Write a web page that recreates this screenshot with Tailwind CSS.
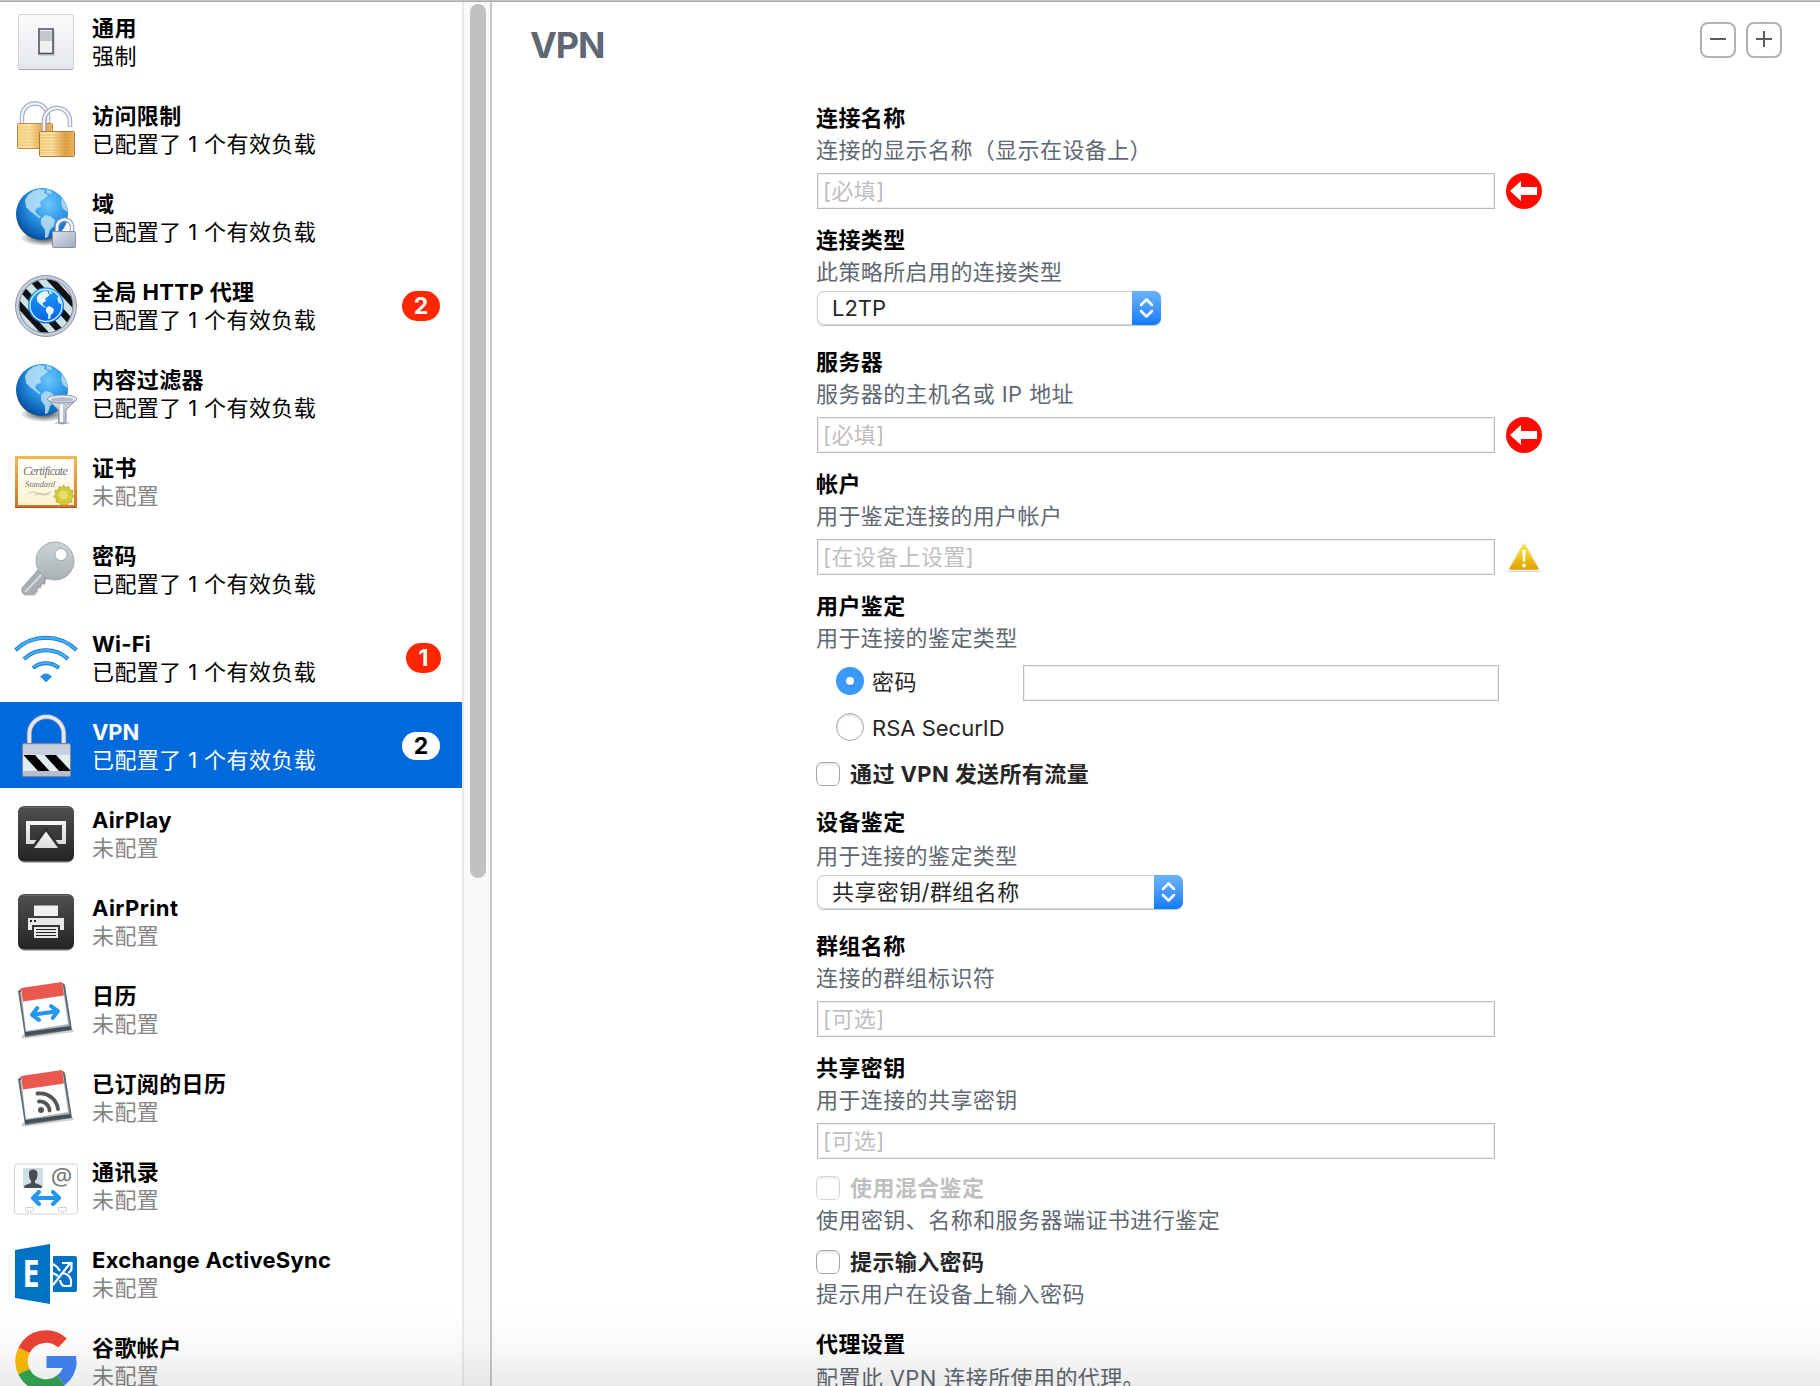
<!DOCTYPE html>
<html lang="zh-CN">
<head>
<meta charset="utf-8">
<title>VPN</title>
<script src="https://cdn.jsdelivr.net/npm/@tailwindcss/browser@4"></script>
</head>
<body class="relative h-[1386px] w-[1820px] overflow-hidden bg-white font-['Inter','Noto_Sans_CJK_SC',sans-serif] text-[22px] leading-[28px] tracking-[0.4px] text-black">

<!-- Shared gradients and symbols -->
<svg class="absolute size-0" aria-hidden="true">
  <defs>
    <radialGradient id="ocean" cx="0.62" cy="0.3" r="0.75"><stop offset="0" stop-color="#6cc8fb"/><stop offset="0.45" stop-color="#2f9bea"/><stop offset="0.8" stop-color="#1268bd"/><stop offset="1" stop-color="#07498f"/></radialGradient>
    <radialGradient id="shade"><stop offset="0.3" stop-color="#000" stop-opacity="0.55"/><stop offset="1" stop-color="#000" stop-opacity="0"/></radialGradient>
    <linearGradient id="gold"><stop offset="0" stop-color="#fbd88a"/><stop offset="0.35" stop-color="#fce3a2"/><stop offset="0.75" stop-color="#e2a045"/><stop offset="1" stop-color="#efb869"/></linearGradient>
    <linearGradient id="steel" x1="0" y1="0" x2="1" y2="1"><stop offset="0" stop-color="#dfe4ed"/><stop offset="1" stop-color="#9fabbf"/></linearGradient>
    <linearGradient id="plate" x1="0" y1="0" x2="0" y2="1"><stop offset="0" stop-color="#fbfbfc"/><stop offset="1" stop-color="#e4e7ec"/></linearGradient>
    <linearGradient id="dark" x1="0" y1="0" x2="0" y2="1"><stop offset="0" stop-color="#505050"/><stop offset="1" stop-color="#242424"/></linearGradient>
    <linearGradient id="pale" x1="0" y1="0" x2="0" y2="1"><stop offset="0" stop-color="#f6f6f6"/><stop offset="1" stop-color="#dcdcdc"/></linearGradient>
    <linearGradient id="frame" x1="0" y1="0" x2="0" y2="1"><stop offset="0" stop-color="#f3b950"/><stop offset="1" stop-color="#cf722a"/></linearGradient>
    <linearGradient id="paper" x1="0" y1="0" x2="0" y2="1"><stop offset="0" stop-color="#ffffff"/><stop offset="1" stop-color="#fdf3cf"/></linearGradient>
    <linearGradient id="keymetal" x1="0" y1="0" x2="0" y2="1"><stop offset="0" stop-color="#cdd4d6"/><stop offset="1" stop-color="#a9b1b4"/></linearGradient>
    <linearGradient id="warn" x1="0" y1="0" x2="0" y2="1"><stop offset="0" stop-color="#fde53a"/><stop offset="1" stop-color="#dfa400"/></linearGradient>
    <linearGradient id="bluering" x1="0" y1="0" x2="0" y2="1"><stop offset="0" stop-color="#1ba0ff"/><stop offset="1" stop-color="#0560e0"/></linearGradient>
    <symbol id="land" viewBox="0 0 52 52">
      <path d="M12 7 17 3 23 1 29 2 28 5 32 7 29 10 24 14 25 19 21 20 19 23 21 26 25 29 23 30 18 26 14 23 10 19 9 12ZM30 1 35 3 36 6 31 5ZM46 10 50 17 51.500 24 47 21 45 15ZM25 31 29 27 34 28 39 32 38 38 34 42 32 49 29 50 29 42 25 36Z"/>
    </symbol>
    <symbol id="globe" viewBox="0 0 64 64">
      <ellipse cx="30" cy="52" rx="24" ry="8" fill="url(#shade)"/>
      <circle cx="28" cy="28" r="26" fill="url(#ocean)"/>
      <use href="#land" x="2" y="2" width="52" height="52" fill="#b9e0f5" fill-opacity="0.85"/>
    </symbol>
    <symbol id="arrows" viewBox="0 0 32 16">
      <path d="M3 8H29M9 2 3 8 9 14M23 2 29 8 23 14" fill="none" stroke="#2497ec" stroke-width="4" stroke-linecap="round" stroke-linejoin="round"/>
    </symbol>
    <symbol id="calendar" viewBox="0 0 64 64">
      <path d="M8 61 60 54 58 50 8 57Z" fill="#000" fill-opacity="0.18"/>
      <path d="M4 13 7 11 49 5 51 7 58 52 11 59Z" fill="#5d6a72"/>
      <path d="M6 14 49 7 56 50 12 56Z" fill="#aeb8bc"/>
      <path d="M11 57.500 57 51.500 56 48 11 54Z" fill="#454f55"/>
      <path d="M7 11 48 4 54 46 12 53Z" fill="#fdfdfd"/>
      <path d="M7 10 48 4 50 17.500 9 23.500Z" fill="#e9574f"/>
    </symbol>
    <symbol id="chev" viewBox="0 0 29 34">
      <path d="M9 14 14.500 8.500 20 14M9 20 14.500 25.500 20 20" fill="none" stroke="#fff" stroke-width="2.500" stroke-linecap="round" stroke-linejoin="round"/>
    </symbol>
    <symbol id="required" viewBox="0 0 36 36">
      <circle cx="18" cy="18" r="18" fill="#ff0a00"/>
      <path d="M4 18 15 8V14H31V22H15V28Z" fill="#fff"/>
    </symbol>
  </defs>
</svg>

<div class="flex h-full w-full">
  <!-- Payload list -->
  <nav class="flex h-full w-[464px] shrink-0 flex-col gap-[2px] overflow-hidden border-r-2 border-[#e8e8e8]">
    <div class="-mt-[2px] flex h-[86px] shrink-0 items-center gap-[14px] pt-[2px] pl-[14px]">
      <svg class="size-16 shrink-0" viewBox="0 0 64 64">
        <rect x="4.500" y="4.500" width="55" height="55" rx="1.500" fill="url(#plate)" stroke="#cfd1d4"/><path d="M5 59.500H59" stroke="#a9abad"/>
        <rect x="24" y="20" width="17" height="26" fill="#000" fill-opacity="0.12"/>
        <rect x="25" y="19" width="14" height="24.500" fill="#eef0f2" stroke="#4a4e50" stroke-width="1.500"/><rect x="26" y="21" width="12" height="10" fill="#c6c8cb"/>
      </svg>
      <div class="-mt-px"><div class="font-bold">通用</div><div>强制</div></div>
    </div>
    <div class="flex h-[86px] shrink-0 items-center gap-[14px] pt-[2px] pl-[14px]">
      <svg class="size-16 shrink-0" viewBox="0 0 64 64" fill="none">
        <path d="M8 26V18.500a13 13 0 0 1 26 0V26" stroke="#98a3bd" stroke-width="4.500"/><path d="M8 26V18.500a13 13 0 0 1 26 0V26" stroke="#eef1f7" stroke-width="2.500"/>
        <rect x="3.500" y="25.500" width="35" height="25" rx="1" fill="url(#gold)" stroke="#b98a4a"/>
        <path d="M4 29H38M4 32H38M4 35H38M4 38H38M4 41H38M4 44H38M4 47H38" stroke="#c98a30" stroke-opacity="0.3"/>
        <path d="M30 34V23a13 13 0 0 1 26 0V29" stroke="#98a3bd" stroke-width="4.500"/><path d="M30 34V23a13 13 0 0 1 26 0V28.500" stroke="#eef1f7" stroke-width="2.500"/>
        <rect x="25.500" y="33.500" width="35" height="25" rx="1" fill="url(#gold)" stroke="#a97d45"/>
        <path d="M26 37H60M26 40H60M26 43H60M26 46H60M26 49H60M26 52H60M26 55H60" stroke="#c98a30" stroke-opacity="0.35"/>
      </svg>
      <div><div class="font-bold">访问限制</div><div>已配置了 1 个有效负载</div></div>
    </div>
    <div class="flex h-[86px] shrink-0 items-center gap-[14px] pt-[2px] pl-[14px]">
      <svg class="size-16 shrink-0" viewBox="0 0 64 64">
        <use href="#globe" width="64" height="64"/>
        <path d="M43 46V41a7.500 7.500 0 0 1 15 0V46" fill="none" stroke="#8c98ae" stroke-width="4.500"/><path d="M43 46V41a7.500 7.500 0 0 1 15 0V46" fill="none" stroke="#f0f3f8" stroke-width="2.500"/>
        <rect x="38.500" y="45.500" width="23" height="16" rx="1" fill="url(#steel)" stroke="#8791a5"/>
      </svg>
      <div><div class="font-bold">域</div><div>已配置了 1 个有效负载</div></div>
    </div>
    <div class="flex h-[86px] shrink-0 items-center gap-[14px] pt-[2px] pl-[14px]">
      <svg class="size-16 shrink-0" viewBox="0 0 64 64">
        <clipPath id="disc"><circle cx="32" cy="32" r="26.500"/></clipPath>
        <circle cx="32" cy="32" r="30.500" fill="#c6cddc" stroke="#8d96aa"/>
        <circle cx="32" cy="32" r="27" fill="#cfe0e6" stroke="#7f899c"/>
        <g clip-path="url(#disc)" stroke="#0c1214" stroke-width="6.500"><path d="M-4 21 42 71M-2 4 58 70M8 -6 68 60M26 -6 78 50"/></g>
        <circle cx="32" cy="31.500" r="18" fill="url(#bluering)"/><circle cx="32" cy="31.500" r="16" fill="none" stroke="#d8edff" stroke-width="1.300"/>
        <use href="#land" x="17.500" y="16.500" width="30" height="30" fill="#e8f5ff"/>
      </svg>
      <div class="grow"><div class="font-bold tracking-[0.4px]">全局 HTTP 代理</div><div>已配置了 1 个有效负载</div></div>
      <span class="mr-[22px] mb-px flex h-[30px] w-[38px] items-center justify-center rounded-full bg-[#ff2600] text-[23px] font-bold tracking-normal text-white">2</span>
    </div>
    <div class="flex h-[86px] shrink-0 items-center gap-[14px] pt-[2px] pl-[14px]">
      <svg class="size-16 shrink-0" viewBox="0 0 64 64">
        <use href="#globe" width="64" height="64"/>
        <ellipse cx="48" cy="61" rx="8" ry="1.500" fill="#000" fill-opacity="0.2"/>
        <path d="M33.500 37 44.500 48V60.500C46 62 51 62 52 60.500V48L63 37Z" fill="url(#steel)" stroke="#8791a5"/>
        <ellipse cx="48.200" cy="37" rx="14.700" ry="4" fill="#eef1f6" stroke="#8791a5"/><ellipse cx="48.200" cy="37.500" rx="11.500" ry="2.300" fill="#b4bccb"/>
        <path d="M47.500 42V60" stroke="#f5f7fa" stroke-width="3"/>
      </svg>
      <div><div class="font-bold">内容过滤器</div><div>已配置了 1 个有效负载</div></div>
    </div>
    <div class="flex h-[86px] shrink-0 items-center gap-[14px] pt-[2px] pl-[14px]">
      <svg class="size-16 shrink-0" viewBox="0 0 64 64">
        <rect x="1" y="6" width="62" height="52" fill="url(#frame)"/><path d="M1 57.500H63" stroke="#a8581c"/><rect x="4" y="9" width="56" height="46" fill="url(#paper)"/>
        <text x="9" y="25" font-family="Liberation Serif" font-style="italic" font-size="12.500" fill="#777" textLength="45" letter-spacing="0">Certificate</text>
        <text x="11" y="36.500" font-family="Liberation Serif" font-style="italic" font-size="8.500" fill="#777" textLength="30" letter-spacing="0">Standard</text>
        <path d="M14 44C20 38 26 48 37 42M20 45C26 42 30 47 35 44" fill="none" stroke="#c9c2a8"/>
        <path d="m49.500 35 2 3 3.500-1.500.5 3.500 3.500.5-1 3.500 2.500 2.500-3 2 .5 3.500-3.500.5-1.500 3-3-1.500-3 1.500-1.500-3-3.500-.5.5-3.500-3-2 2.500-2.500-1-3.500 3.500-.5.500-3.500 3.500 1.500Z" fill="#d6cb3c" stroke="#a89c22" stroke-width="0.700"/><circle cx="49.500" cy="45" r="4.500" fill="#e6de6a"/>
      </svg>
      <div><div class="font-bold">证书</div><div class="text-[#868686]">未配置</div></div>
    </div>
    <div class="flex h-[86px] shrink-0 items-center gap-[14px] pt-[2px] pl-[14px]">
      <svg class="size-16 shrink-0" viewBox="0 0 64 64">
        <path d="M25 32 8 50V54L10 56.500H21L24 53V49.500H27L28 46 31 45V40.500L36 40Z" fill="#000" fill-opacity="0.15" transform="translate(0.500 1.500)"/>
        <path d="M24 32 8 50V54L10 56H20L23 52V49H26L27 46 31 45V40.500L36 40Z" fill="#a9b0b4" stroke="#868e92" stroke-width="0.800"/>
        <path d="M28 36 11 54" stroke="#d5dadc" stroke-width="2"/>
        <path fill-rule="evenodd" d="M22 23A19 19 0 1 1 60 23A19 19 0 1 1 22 23ZM41 16.500A6 6 0 1 0 53 16.500A6 6 0 1 0 41 16.500Z" fill="url(#keymetal)" stroke="#929b9f" stroke-width="0.800"/>
      </svg>
      <div><div class="font-bold">密码</div><div>已配置了 1 个有效负载</div></div>
    </div>
    <div class="flex h-[86px] shrink-0 items-center gap-[14px] pt-[2px] pl-[14px]">
      <svg class="size-16 shrink-0" viewBox="0 0 64 64" fill="none">
        <g stroke="#1b6fb8" stroke-width="4"><path d="M1.500 24A44 44 0 0 1 62.500 24M10 33A32 32 0 0 1 54 33M19 42A20 20 0 0 1 45 42"/></g>
        <g stroke="#3fb0fb" stroke-width="2.400"><path d="M2 23.500A44 44 0 0 1 62 23.500M10.500 32.500A32 32 0 0 1 53.500 32.500M19.500 41.500A20 20 0 0 1 44.500 41.500"/></g>
        <path d="M26.500 50.500Q32 45 37.500 50.500L32 56Z" fill="#1f8ff2" stroke="#1b6fb8" stroke-width="0.500"/>
      </svg>
      <div class="grow"><div class="font-bold tracking-[0.2px]">Wi-Fi</div><div>已配置了 1 个有效负载</div></div>
      <span class="mr-[21px] mb-px flex h-[30px] w-[35px] items-center justify-center rounded-full bg-[#ff2600] text-[23px] font-bold tracking-normal text-white">1</span>
    </div>
    <div class="flex h-[86px] shrink-0 items-center gap-[14px] bg-[#0069dc] pt-[2px] pl-[14px] text-white">
      <svg class="size-16 shrink-0" viewBox="0 0 64 64">
        <path d="M15.300 32V20a17.200 17.200 0 0 1 34.400 0V32" fill="none" stroke="#8c97a8" stroke-width="5"/><path d="M15.300 32V20a17.200 17.200 0 0 1 34.400 0V32" fill="none" stroke="#e4e7ee" stroke-width="3.600"/>
        <rect x="8.500" y="29.500" width="48" height="33" rx="1.500" fill="#b5bccd" stroke="#7c8799"/>
        <rect x="9" y="31" width="47" height="9" fill="#c9cedc"/>
        <rect x="9" y="40.500" width="47" height="16.500" fill="#e2edf0"/>
        <path d="M9.500 41H21L35.500 57H24ZM30.500 41H42L56 56V57H45Z" fill="#000"/>
      </svg>
      <div class="grow"><div class="font-bold tracking-[-0.1px]">VPN</div><div>已配置了 1 个有效负载</div></div>
      <span class="mr-[22px] flex h-[28px] w-[38px] items-center justify-center rounded-full bg-white text-[23px] font-bold tracking-normal text-black">2</span>
    </div>
    <div class="flex h-[86px] shrink-0 items-center gap-[14px] pt-[2px] pl-[14px]">
      <svg class="size-16 shrink-0" viewBox="0 0 64 64">
        <rect x="5" y="6" width="54" height="55" rx="6" fill="#000" fill-opacity="0.3"/><rect x="4" y="4" width="56" height="55.500" rx="6" fill="url(#dark)"/><path d="M8 5.500H56" stroke="#6a6a6a"/>
        <path d="M14 40V21H50V40H14Z" fill="none" stroke="url(#pale)" stroke-width="4"/>
        <path d="M32 24.500 15.500 48H48.500Z" fill="#303030"/><path d="M32 29.500 20 46H44Z" fill="url(#pale)"/>
      </svg>
      <div><div class="font-bold tracking-[0.3px]">AirPlay</div><div class="text-[#868686]">未配置</div></div>
    </div>
    <div class="flex h-[86px] shrink-0 items-center gap-[14px] pt-[2px] pl-[14px]">
      <svg class="size-16 shrink-0" viewBox="0 0 64 64">
        <rect x="5" y="6" width="54" height="55" rx="6" fill="#000" fill-opacity="0.3"/><rect x="4" y="4" width="56" height="55.500" rx="6" fill="url(#dark)"/><path d="M8 5.500H56" stroke="#6a6a6a"/>
        <rect x="20" y="15.500" width="24" height="10.500" fill="#f0f0f0"/><path d="M14 28H50V40H46V35H18V40H14Z" fill="#e8e8e8"/>
        <path d="M16 30h2v2h-2zM20 30h2v2h-2z" fill="#222"/>
        <rect x="20" y="37" width="24" height="11" fill="#e6e6e6"/><path d="M22 39.500H42M22 42.500H42M22 45.500H42" stroke="#222"/>
      </svg>
      <div><div class="font-bold tracking-[0.45px]">AirPrint</div><div class="text-[#868686]">未配置</div></div>
    </div>
    <div class="flex h-[86px] shrink-0 items-center gap-[14px] pt-[2px] pl-[14px]">
      <svg class="size-16 shrink-0" viewBox="0 0 64 64">
        <use href="#calendar" width="64" height="64"/>
        <g transform="rotate(-8 31 35)"><use href="#arrows" x="14.500" y="27" width="33" height="16"/></g>
      </svg>
      <div><div class="font-bold">日历</div><div class="text-[#868686]">未配置</div></div>
    </div>
    <div class="flex h-[86px] shrink-0 items-center gap-[14px] pt-[2px] pl-[14px]">
      <svg class="size-16 shrink-0" viewBox="0 0 64 64">
        <use href="#calendar" width="64" height="64"/>
        <circle cx="27" cy="44" r="3" fill="#555"/><path d="M25 35.500A9.500 9.500 0 0 1 35.500 44.500M23.500 27.500A18 18 0 0 1 44 43" fill="none" stroke="#555" stroke-width="3.800" stroke-linecap="round"/>
      </svg>
      <div><div class="font-bold">已订阅的日历</div><div class="text-[#868686]">未配置</div></div>
    </div>
    <div class="flex h-[86px] shrink-0 items-center gap-[14px] pt-[2px] pl-[14px]">
      <svg class="size-16 shrink-0" viewBox="0 0 64 64">
        <path d="M15 60H3Q0.500 60 0.500 57V13Q0.500 10 3 10H61Q63.500 10 63.500 13V57Q63.500 60 61 60H49.500V57H52.500V53.500H44.500V57H47.500V60H16.500V57H19.500V53.500H11.500V57H14.500V60" fill="#fff" stroke="#d3d3d3"/>
        <rect x="9" y="14" width="20" height="20" fill="#cfdde4"/>
        <path d="M15 20Q14.500 15.500 19 15.500T23.500 20Q23.500 25 21 27V29L27.500 31.500 28 34H10L10.500 31.500 17 29V27Q15 25 15 20Z" fill="#4a4e50"/>
        <text x="47.500" y="31" text-anchor="middle" font-family="Noto Sans" font-size="24" letter-spacing="0" fill="#777">@</text>
        <use href="#arrows" x="15.500" y="36" width="33" height="16"/>
      </svg>
      <div><div class="font-bold">通讯录</div><div class="text-[#868686]">未配置</div></div>
    </div>
    <div class="flex h-[86px] shrink-0 items-center gap-[14px] pt-[2px] pl-[14px]">
      <svg class="size-16 shrink-0" viewBox="0 0 64 64">
        <path d="M1 8 36 2V62L1 56Z" fill="#0072c6"/>
        <text x="8.500" y="44.500" font-family="Open Sans" font-weight="700" font-size="37" letter-spacing="0" textLength="17" lengthAdjust="spacingAndGlyphs" fill="#fff">E</text>
        <path d="M39 14H61Q63 14 63 16V48Q63 50 61 50H39Z" fill="#0072c6"/>
        <g fill="none" stroke="#fff" stroke-width="2.200"><path d="M39 43 57 20M48 21H57.500V27Q57 30 54 31M57 43.500V38Q56 33 49 31M57.500 44H50Q47 43 46 38M39 22Q43 24 46 29M39 31 44 34"/></g>
      </svg>
      <div><div class="font-bold tracking-[0.27px]">Exchange ActiveSync</div><div class="text-[#868686]">未配置</div></div>
    </div>
    <div class="flex h-[86px] shrink-0 items-center gap-[14px] pt-[2px] pl-[14px]">
      <svg class="size-16 shrink-0" viewBox="0 0 64 64" fill="none" stroke-width="12.500">
        <path d="M10 20.400A24.400 24.400 0 0 1 48.500 13" stroke="#e94335"/>
        <path d="M10 41.600A24.400 24.400 0 0 1 10 20.400" stroke="#fbbc05"/>
        <path d="M47 50.200A24.400 24.400 0 0 1 10 41.600" stroke="#34a853"/>
        <path d="M56.400 32A24.400 24.400 0 0 1 47 50.200" stroke="#4285f4"/>
        <path d="M32.500 26H62Q63 32 62 38H32.500Z" fill="#4285f4"/>
      </svg>
      <div><div class="font-bold">谷歌帐户</div><div class="text-[#868686]">未配置</div></div>
    </div>
  </nav>

  <!-- Scrollbar -->
  <div class="h-full w-[28px] shrink-0 border-r-2 border-[#c8c8c8] bg-[#fafafa] pt-1 pl-[6px]">
    <div class="h-[874px] w-4 rounded-full bg-[#c1c1c1]"></div>
  </div>

  <!-- Payload settings -->
  <main class="flex h-full grow flex-col">
    <header class="flex h-[102px] shrink-0 items-start justify-between pr-[38px] pl-[38px] pt-[22px]">
      <h1 class="text-[36px] leading-[46px] font-bold tracking-[-1.1px] text-[#5f6872]">VPN</h1>
      <div class="flex gap-[10px]">
        <button class="flex size-9 items-center justify-center rounded-[8px] border-2 border-[#b1b1b1] pb-[2px]"><svg class="size-4" viewBox="0 0 16 16"><path d="M0 8H16" stroke="#5c5c5c" stroke-width="2"/></svg></button>
        <button class="flex size-9 items-center justify-center rounded-[8px] border-2 border-[#b1b1b1] pb-[2px]"><svg class="size-4" viewBox="0 0 16 16"><path d="M0 8H16M8 0V16" stroke="#5c5c5c" stroke-width="2"/></svg></button>
      </div>
    </header>

    <div class="flex flex-col pl-[324px] leading-[32px]">
      <section class="mb-[15px]">
        <div class="font-bold">连接名称</div>
        <div class="text-[#5f6872]">连接的显示名称（显示在设备上）</div>
        <div class="mt-[7px] flex items-center gap-[11px] pl-px">
          <div class="h-9 w-[678px] border border-[#bcbcbc] pt-px pl-[5px] text-[#bfbfbf] shadow-[inset_0_0_0_1px_#f0f0f0]">[必填]</div>
          <svg class="size-9"><use href="#required" width="36" height="36"/></svg>
        </div>
      </section>

      <section class="mb-[21px]">
        <div class="font-bold">连接类型</div>
        <div class="text-[#5f6872]">此策略所启用的连接类型</div>
        <div class="mt-[3px] ml-px flex h-[34px] w-[344px] justify-between rounded-[7px] bg-white pl-[15px] text-[#262626] shadow-[inset_0_0_0_1px_#cfcfcf,0_1px_1px_#c4c4c4]"><span class="pt-px tracking-normal">L2TP</span><svg class="h-[34px] w-[29px] rounded-r-[7px] bg-linear-to-b from-[#6bb3fa] to-[#0a7bff]"><use href="#chev" width="29" height="34"/></svg></div>
      </section>

      <section class="mb-[15px]">
        <div class="font-bold">服务器</div>
        <div class="text-[#5f6872]">服务器的主机名或 IP 地址</div>
        <div class="mt-[7px] flex items-center gap-[11px] pl-px">
          <div class="h-9 w-[678px] border border-[#bcbcbc] pt-px pl-[5px] text-[#bfbfbf] shadow-[inset_0_0_0_1px_#f0f0f0]">[必填]</div>
          <svg class="size-9"><use href="#required" width="36" height="36"/></svg>
        </div>
      </section>

      <section class="mb-[15px]">
        <div class="font-bold">帐户</div>
        <div class="text-[#5f6872]">用于鉴定连接的用户帐户</div>
        <div class="mt-[7px] flex items-center gap-[11px] pl-px">
          <div class="h-9 w-[678px] border border-[#bcbcbc] pt-px pl-[5px] text-[#bfbfbf] shadow-[inset_0_0_0_1px_#f0f0f0]">[在设备上设置]</div>
          <svg class="size-9" viewBox="0 0 36 36">
            <path d="M18 6.500 32.500 31H3.500Z" fill="#b9b9b9" stroke="#b9b9b9" stroke-width="4" stroke-linejoin="round"/>
            <path d="M18 6 32.500 30.500H3.500Z" fill="#f1f1f1" stroke="#f1f1f1" stroke-width="4" stroke-linejoin="round"/>
            <path d="M18 6 31.500 29.800H4.500Z" fill="url(#warn)" stroke="url(#warn)" stroke-width="2" stroke-linejoin="round"/>
            <path d="M16.200 11H19.800L19 22.500H17Z" fill="#fff"/><circle cx="18" cy="26.500" r="1.900" fill="#fff"/>
          </svg>
        </div>
      </section>

      <section>
        <div class="font-bold">用户鉴定</div>
        <div class="text-[#5f6872]">用于连接的鉴定类型</div>
        <div class="mt-1 flex h-[46px] items-center pl-5 text-[#262626]">
          <span class="flex size-7 items-center justify-center rounded-full bg-[#3b99fc]"><span class="size-2 rounded-full bg-white shadow-[0_1px_1px_#2a7cd0]"></span></span>
          <span class="w-[159px] pt-[2px] pl-2">密码</span>
          <span class="mt-1 h-9 w-[476px] border border-[#bcbcbc] shadow-[inset_0_0_0_1px_#f0f0f0]"></span>
        </div>
        <div class="flex h-[46px] items-center pl-5 text-[#262626]">
          <span class="size-7 rounded-full border border-[#a8a8a8] shadow-[inset_0_2px_2px_#e4e4e4]"></span>
          <span class="pt-[2px] pl-2 tracking-normal">RSA SecurID</span>
        </div>
        <div class="mt-2 flex items-center gap-[10px] font-bold text-[#262626]">
          <span class="size-6 rounded-[6px] border border-[#a8a8a8] shadow-[inset_0_2px_2px_#e8e8e8]"></span>通过 VPN 发送所有流量
        </div>
      </section>

      <section class="mt-4 mb-[21px]">
        <div class="font-bold">设备鉴定</div>
        <div class="mt-[2px] text-[#5f6872]">用于连接的鉴定类型</div>
        <div class="mt-[3px] ml-px flex h-[34px] w-[366px] justify-between rounded-[7px] bg-white pl-[15px] text-[#262626] shadow-[inset_0_0_0_1px_#cfcfcf,0_1px_1px_#c4c4c4]"><span class="pt-px">共享密钥/群组名称</span><svg class="h-[34px] w-[29px] rounded-r-[7px] bg-linear-to-b from-[#6bb3fa] to-[#0a7bff]"><use href="#chev" width="29" height="34"/></svg></div>
      </section>

      <section class="mb-[15px]">
        <div class="font-bold">群组名称</div>
        <div class="text-[#5f6872]">连接的群组标识符</div>
        <div class="mt-[7px] ml-px h-9 w-[678px] border border-[#bcbcbc] pt-px pl-[5px] text-[#bfbfbf] shadow-[inset_0_0_0_1px_#f0f0f0]">[可选]</div>
      </section>

      <section>
        <div class="font-bold">共享密钥</div>
        <div class="text-[#5f6872]">用于连接的共享密钥</div>
        <div class="mt-[7px] ml-px h-9 w-[678px] border border-[#bcbcbc] pt-px pl-[5px] text-[#bfbfbf] shadow-[inset_0_0_0_1px_#f0f0f0]">[可选]</div>
      </section>

      <section class="mt-[13px]">
        <div class="flex items-center gap-[10px] font-bold text-[#bfbfbf]">
          <span class="size-6 rounded-[6px] border border-[#d6d6d6] shadow-[inset_0_2px_2px_#f2f2f2]"></span>使用混合鉴定
        </div>
        <div class="tracking-[0.45px] text-[#5f6872]">使用密钥、名称和服务器端证书进行鉴定</div>
      </section>

      <section class="mt-[10px]">
        <div class="flex items-center gap-[10px] font-bold text-[#262626]">
          <span class="size-6 rounded-[6px] border border-[#a8a8a8] shadow-[inset_0_2px_2px_#e8e8e8]"></span>提示输入密码
        </div>
        <div class="text-[#5f6872]">提示用户在设备上输入密码</div>
      </section>

      <section class="mt-[18px]">
        <div class="font-bold">代理设置</div>
        <div class="mt-[2px] text-[#5f6872]">配置此 VPN 连接所使用的代理。</div>
      </section>
    </div>
  </main>
</div>

<!-- Window edge and bottom fade -->
<div class="absolute inset-x-0 top-0 h-[2px] border-b border-[#a9a9a9] bg-[#c4c4c4]"></div>
<div class="pointer-events-none absolute inset-x-0 bottom-0 h-[84px] bg-linear-to-b from-black/0 via-black/2 to-black/8"></div>
</body>
</html>
